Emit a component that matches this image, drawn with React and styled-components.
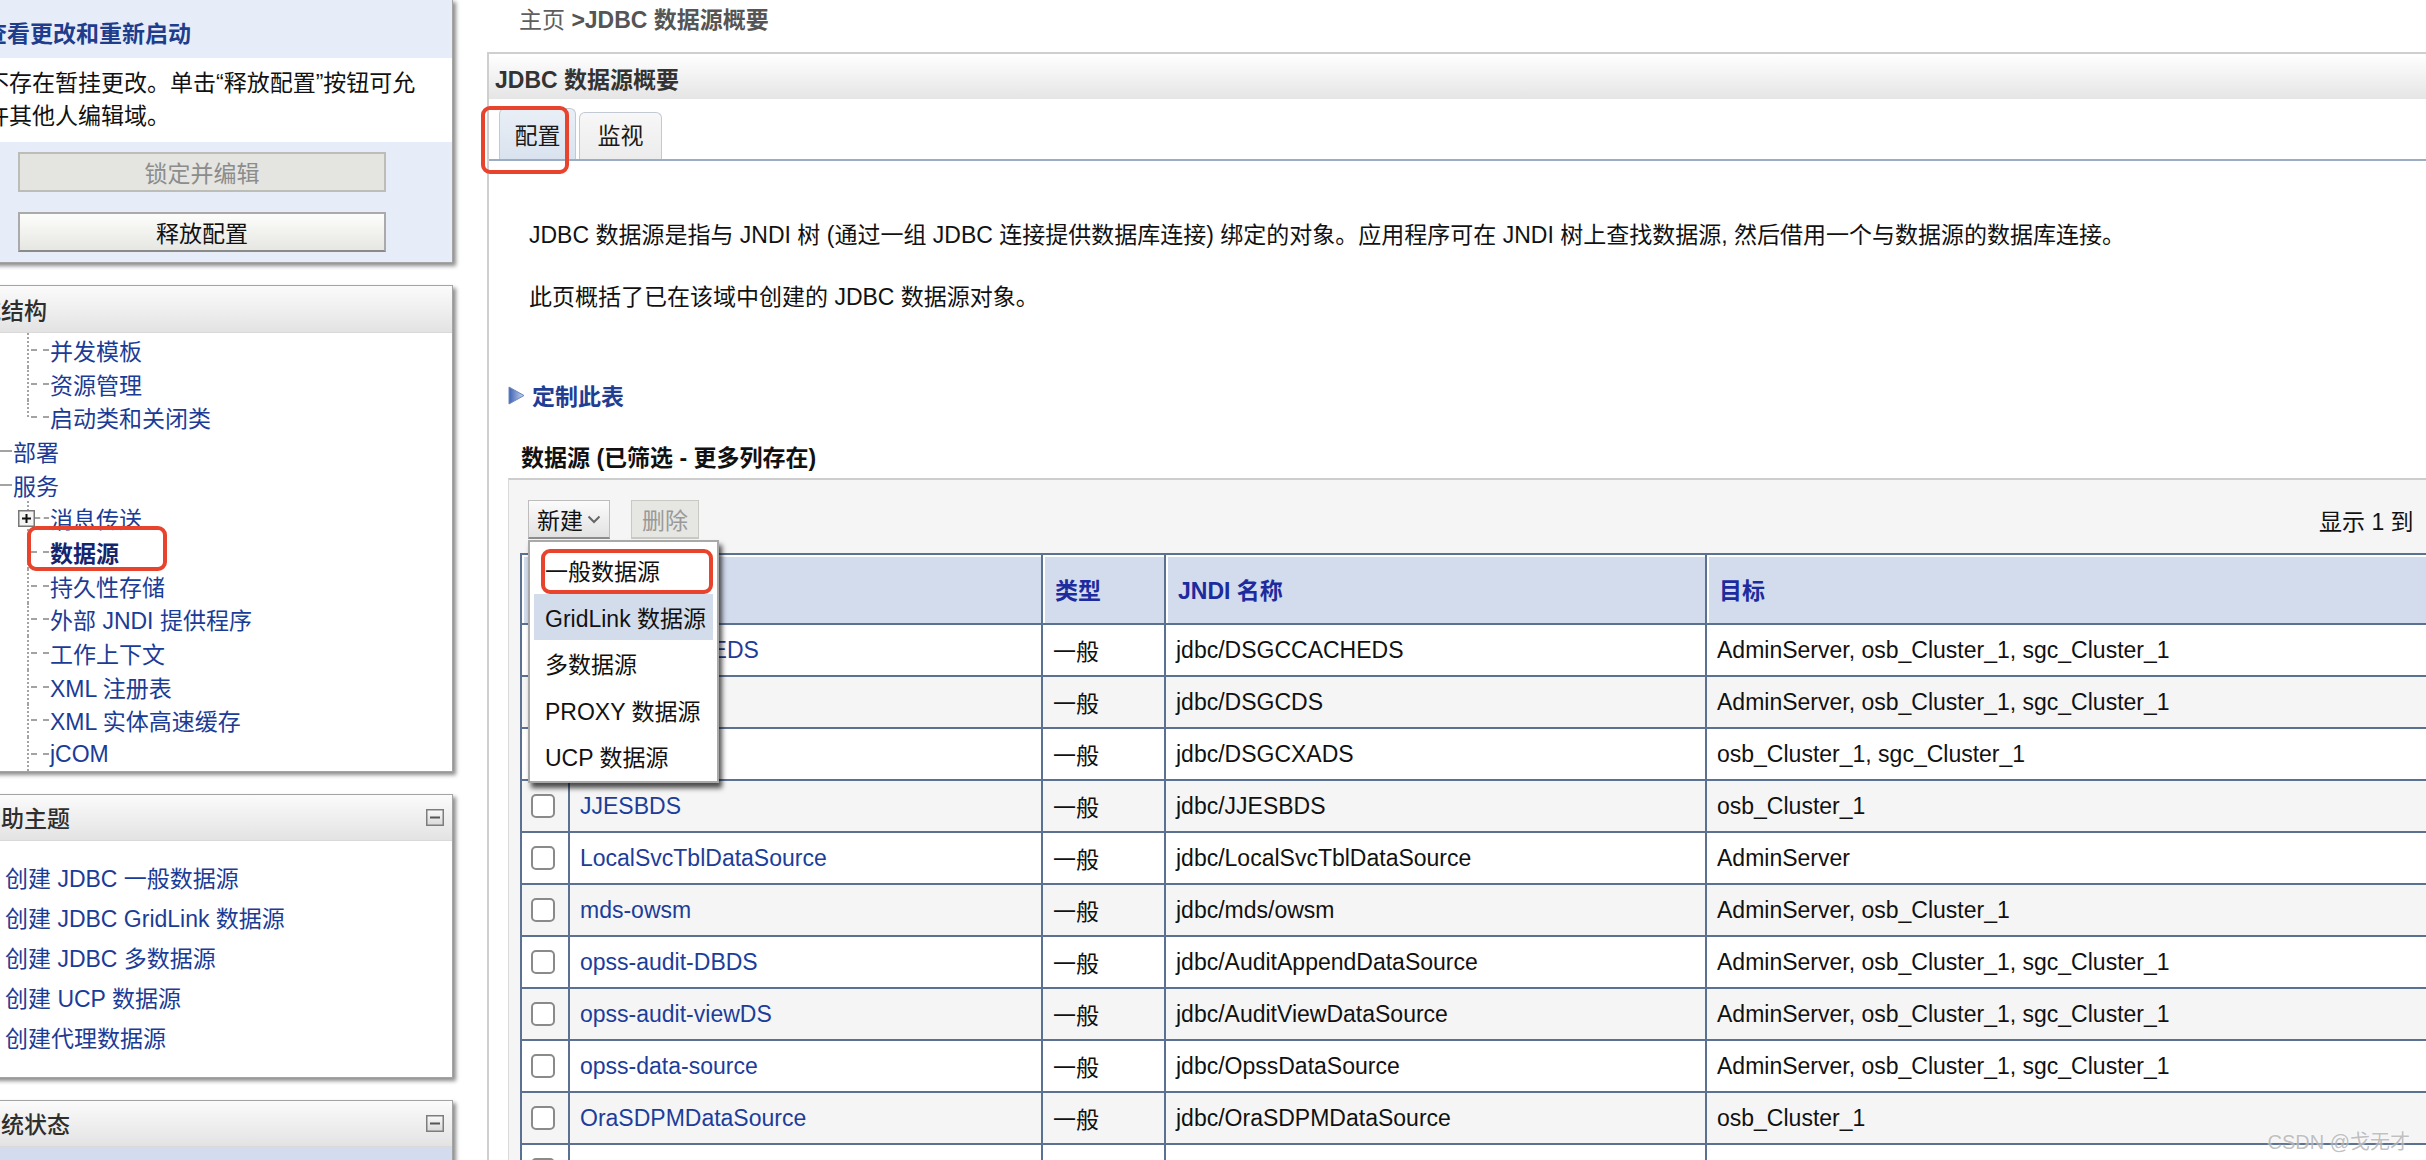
import styled, { createGlobalStyle } from 'styled-components';

const GlobalStyle = createGlobalStyle`
  html, body {
    margin: 0;
    padding: 0;
    background: #fff;
    overflow: hidden;
  }
  body {
    font-family: "Liberation Sans", "Noto Sans CJK SC", sans-serif;
    font-size: 23px;
    color: #000;
  }
  * { box-sizing: border-box; }
`;

const Page = styled.div`
  position: relative;
  display: flex;
  align-items: flex-start;
  gap: 34px;
  width: 2426px;
  height: 1160px;
  overflow: hidden;
`;

/* ---------- left column ---------- */

const LeftColumn = styled.div`
  flex: 0 0 493px;
  margin-left: -40px;
  display: flex;
  flex-direction: column;
  gap: 22px;
`;

const Panel = styled.div`
  background: ${(p) => p.$bg || '#fff'};
  border: 1px solid #a4a4a4;
  box-shadow: 3px 3px 4px rgba(0, 0, 0, 0.45);
  margin-top: ${(p) => (p.$first ? '-1px' : '0')};
`;

const ChangeHeader = styled.div`
  height: 58px;
  padding: 6px 0 0 23px;
  display: flex;
  align-items: center;
  color: #1f3d8d;
  font-weight: bold;
  white-space: nowrap;
`;

const ChangeText = styled.div`
  background: #fff;
  padding: 9px 6px 9px 25px;
  line-height: 33px;
  color: #111;
  white-space: nowrap;
`;

const ButtonStack = styled.div`
  display: flex;
  flex-direction: column;
  gap: 20px;
  padding: 10px 0 10px 57px;
`;

const WideButton = styled.div`
  width: 368px;
  height: 40px;
  display: flex;
  align-items: center;
  justify-content: center;
  border: 2px solid ${(p) => (p.$disabled ? '#bdbdb8' : '#aaa')};
  border-bottom-color: ${(p) => (p.$disabled ? '#bdbdb8' : '#8a8a8a')};
  background: ${(p) =>
    p.$disabled ? '#e4e4e0' : 'linear-gradient(#fdfdfb, #e6e6e2)'};
  color: ${(p) => (p.$disabled ? '#8c8c8c' : '#111')};
`;

const BoxHeader = styled.div`
  height: ${(p) => p.$h || 46}px;
  padding: 0 8px 0 17px;
  display: flex;
  align-items: center;
  justify-content: space-between;
  background: linear-gradient(#fbfbfb, #e3e3e3);
  border-bottom: 1px solid #d9d9d9;
  color: #2e2e2e;
  font-weight: 500;
  white-space: nowrap;
`;

const TreeList = styled.div`
  display: flex;
  flex-direction: column;
`;

const TreeRow = styled.div`
  position: relative;
  display: flex;
  align-items: center;
  height: 33.7px;
  padding-left: ${(p) => (p.$level ? 66 : 39)}px;
  white-space: nowrap;
`;

const Connector = styled.span`
  position: relative;
  flex: 0 0 ${(p) => (p.$level ? 22 : 12)}px;
  align-self: stretch;
  margin-right: 1px;

  &::before {
    content: '';
    display: ${(p) => (p.$level ? 'block' : 'none')};
    position: absolute;
    left: 0;
    top: 0;
    bottom: ${(p) => (p.$last ? '50%' : '0')};
    border-left: 2px dotted #a3a3a3;
  }

  &::after {
    content: '';
    position: absolute;
    left: ${(p) => (p.$plus ? 8 : p.$level ? 4 : 0)}px;
    right: 0;
    top: calc(50% - 1px);
    border-top: 2px dashed #a3a3a3;
  }
`;

const PlusBox = styled.svg`
  position: absolute;
  left: -9px;
  top: calc(50% - 8px);
  z-index: 1;
`;

const TreeLink = styled.span`
  color: ${(p) => (p.$active ? '#14246e' : '#1b3c96')};
  font-weight: ${(p) => (p.$active ? 'bold' : 'normal')};
`;

const Mark = styled.div`
  position: absolute;
  left: ${(p) => p.$x}px;
  top: ${(p) => p.$y}px;
  width: ${(p) => p.$w}px;
  height: ${(p) => p.$h}px;
  border: 4px solid #e8432c;
  border-radius: 9px;
  pointer-events: none;
  z-index: 6;
`;

const HelpList = styled.div`
  display: flex;
  flex-direction: column;
  padding: 18px 0 18px 44px;
`;

const HelpLink = styled.div`
  height: 40px;
  line-height: 40px;
  color: #1b3c96;
  white-space: nowrap;
`;

const StatusBody = styled.div`
  height: 80px;
  background: #d3dcee;
`;

/* ---------- main area ---------- */

const Main = styled.div`
  flex: 0 0 2000px;
  display: flex;
  flex-direction: column;
`;

const Breadcrumb = styled.div`
  height: 52px;
  padding-left: 32px;
  line-height: 40px;
  color: #5e5e5e;
  white-space: nowrap;

  b {
    color: #555;
  }
`;

const MainPanel = styled.div`
  border-top: 2px solid #cfcfcf;
  border-left: 2px solid #cfcfcf;
  background: #fff;
`;

const MainHeader = styled.div`
  height: 45px;
  padding: 2px 0 0 6px;
  display: flex;
  align-items: center;
  background: linear-gradient(#ffffff, #e5e5e5);
  color: #333;
  font-weight: bold;
`;

const TabBar = styled.div`
  height: 62px;
  display: flex;
  align-items: flex-end;
  gap: 3px;
  padding-left: 10px;
  border-bottom: 2px solid #9dadc1;
`;

const Tab = styled.div`
  position: relative;
  height: ${(p) => (p.$active ? 51 : 47)}px;
  padding: 0 ${(p) => (p.$active ? 14.5 : 17.5)}px ${(p) => (p.$active ? 0 : 4)}px;
  display: flex;
  align-items: center;
  border: 1px solid #c2c9d3;
  border-bottom: none;
  border-radius: 6px 6px 0 0;
  background: ${(p) =>
    p.$active ? 'linear-gradient(#e9eff6, #d9e3ef)' : 'linear-gradient(#f7f7f7, #ececec)'};
  color: #1a1a1a;
`;

const Content = styled.div`
  padding-left: 19px;
`;

const Para = styled.p`
  margin: ${(p) => p.$top}px 0 0 21px;
  line-height: 34px;
  white-space: nowrap;
  color: #111;
`;

const Customize = styled.div`
  margin-top: 64px;
  height: 34px;
  display: flex;
  align-items: center;
  gap: 7px;
  color: #1f3e94;
  font-weight: bold;
`;

const SectionTitle = styled.div`
  margin: 29px 0 0 13px;
  height: 34px;
  line-height: 34px;
  font-weight: bold;
  color: #111;
  white-space: nowrap;
`;

const TableBox = styled.div`
  margin-top: 3px;
  border-top: 2px solid #cdcdcd;
  border-left: 1px solid #dadada;
  background: #f5f5f5;
  padding: 20px 0 0 19px;
`;

const Toolbar = styled.div`
  display: grid;
  grid-template-columns: 1791px auto;
  align-items: center;
  height: 39px;
`;

const ButtonGroup = styled.div`
  display: flex;
  gap: 21px;
`;

const MenuAnchor = styled.div`
  position: relative;
`;

const ToolButton = styled.div`
  height: 39px;
  padding: 0 ${(p) => (p.$disabled ? 10 : 8)}px;
  display: flex;
  align-items: center;
  gap: 4px;
  border: 1px solid ${(p) => (p.$disabled ? '#c9c9c4' : '#bdbdbd')};
  border-bottom: 2px solid ${(p) => (p.$disabled ? '#c9c9c4' : '#8d8d8d')};
  background: ${(p) => (p.$disabled ? '#e6e6e2' : 'linear-gradient(#fbfbfb, #e2e2e2)')};
  color: ${(p) => (p.$disabled ? '#999' : '#111')};
`;

const Pager = styled.div`
  white-space: nowrap;
  color: #111;
`;

const Menu = styled.div`
  position: absolute;
  left: 0;
  top: 40px;
  width: 191px;
  padding: 5px 4px 1px;
  background: #fff;
  border: 2px solid #a9a9a9;
  box-shadow: 3px 5px 5px rgba(0, 0, 0, 0.7);
  z-index: 5;
`;

const MenuItem = styled.div`
  position: relative;
  height: 46.5px;
  padding-left: 11px;
  display: flex;
  align-items: center;
  background: ${(p) => (p.$hover ? '#d3dcea' : 'transparent')};
  color: #111;
  white-space: nowrap;
`;

const Grid = styled.table`
  margin: 14px 0 0 -8px;
  border-collapse: collapse;
  table-layout: fixed;
  width: 2085px;
`;

const Col = styled.col`
  width: ${(p) => p.$w}px;
`;

const HeadCell = styled.th`
  height: 70px;
  padding: 0 12px;
  text-align: left;
  background: #d2dcec;
  border: 2px solid #5b7191;
  box-shadow: inset 2px 2px 0 #fff;
  color: #1c2b9e;
  font-weight: bold;
  white-space: nowrap;
`;

const Row = styled.tr`
  background: ${(p) => (p.$even ? '#f5f5f5' : '#fff')};
`;

const Cell = styled.td`
  height: 52px;
  padding: 0 ${(p) => (p.$check ? 9 : 10)}px;
  border: 2px solid #5b7191;
  white-space: nowrap;
  overflow: hidden;
  color: #111;
`;

const NameLink = styled.span`
  color: #1c3d9a;
`;

const CheckBox = styled.span`
  display: block;
  width: 24px;
  height: 24px;
  border: 2px solid #8a8a8a;
  border-radius: 5px;
  background: #fff;
`;

const Watermark = styled.div`
  position: absolute;
  right: 16px;
  bottom: 5px;
  font-size: 20px;
  color: rgba(140, 140, 140, 0.55);
  text-shadow: 0 0 2px #fff;
  white-space: nowrap;
`;

/* ---------- icons ---------- */

const MinusIcon = () => (
  <svg width="18" height="17" viewBox="0 0 18 17">
    <defs>
      <linearGradient id="minusFill" x1="0" y1="0" x2="0" y2="1">
        <stop offset="0" stopColor="#fafafa" />
        <stop offset="1" stopColor="#d9d9d9" />
      </linearGradient>
    </defs>
    <rect x="0.75" y="0.75" width="16.5" height="15.5" fill="url(#minusFill)" stroke="#7d7d7d" strokeWidth="1.5" />
    <rect x="4" y="7.5" width="10" height="2" fill="#555" />
  </svg>
);

const PlusIcon = () => (
  <PlusBox width="17" height="17" viewBox="0 0 17 17">
    <rect x="0.75" y="0.75" width="15.5" height="15.5" fill="#f4f4f4" stroke="#777" strokeWidth="1.5" />
    <rect x="4" y="7.5" width="9" height="2" fill="#111" />
    <rect x="7.5" y="4" width="2" height="9" fill="#111" />
  </PlusBox>
);

const ExpandTriangle = () => (
  <svg width="17" height="19" viewBox="0 0 17 19">
    <defs>
      <linearGradient id="triFill" x1="0" y1="0" x2="1" y2="0">
        <stop offset="0" stopColor="#3e62b2" />
        <stop offset="1" stopColor="#c8d5ee" />
      </linearGradient>
    </defs>
    <polygon points="1,1 16,9.5 1,18" fill="url(#triFill)" stroke="#6c86c2" strokeWidth="1" />
  </svg>
);

const Chevron = () => (
  <svg width="14" height="9" viewBox="0 0 14 9">
    <polyline points="1.5,1.5 7,7 12.5,1.5" fill="none" stroke="#666" strokeWidth="2" />
  </svg>
);

/* ---------- data ---------- */

const tree = [
  { label: '并发模板', level: 1 },
  { label: '资源管理', level: 1 },
  { label: '启动类和关闭类', level: 1, last: true },
  { label: '部署', level: 0 },
  { label: '服务', level: 0 },
  { label: '消息传送', level: 1, plus: true },
  { label: '数据源', level: 1, active: true },
  { label: '持久性存储', level: 1 },
  { label: '外部 JNDI 提供程序', level: 1 },
  { label: '工作上下文', level: 1 },
  { label: 'XML 注册表', level: 1 },
  { label: 'XML 实体高速缓存', level: 1 },
  { label: 'jCOM', level: 1 },
];

const helpTopics = [
  '创建 JDBC 一般数据源',
  '创建 JDBC GridLink 数据源',
  '创建 JDBC 多数据源',
  '创建 UCP 数据源',
  '创建代理数据源',
];

const menuItems = ['一般数据源', 'GridLink 数据源', '多数据源', 'PROXY 数据源', 'UCP 数据源'];

const ALL = 'AdminServer, osb_Cluster_1, sgc_Cluster_1';

const dataSources = [
  { name: 'DSGCCACHEDS', jndi: 'jdbc/DSGCCACHEDS', target: ALL },
  { name: 'DSGCDS', jndi: 'jdbc/DSGCDS', target: ALL },
  { name: 'DSGCXADS', jndi: 'jdbc/DSGCXADS', target: 'osb_Cluster_1, sgc_Cluster_1' },
  { name: 'JJESBDS', jndi: 'jdbc/JJESBDS', target: 'osb_Cluster_1' },
  { name: 'LocalSvcTblDataSource', jndi: 'jdbc/LocalSvcTblDataSource', target: 'AdminServer' },
  { name: 'mds-owsm', jndi: 'jdbc/mds/owsm', target: 'AdminServer, osb_Cluster_1' },
  { name: 'opss-audit-DBDS', jndi: 'jdbc/AuditAppendDataSource', target: ALL },
  { name: 'opss-audit-viewDS', jndi: 'jdbc/AuditViewDataSource', target: ALL },
  { name: 'opss-data-source', jndi: 'jdbc/OpssDataSource', target: ALL },
  { name: 'OraSDPMDataSource', jndi: 'jdbc/OraSDPMDataSource', target: 'osb_Cluster_1' },
  { name: 'SOADataSource', jndi: 'jdbc/SOADataSource', target: 'osb_Cluster_1' },
];

const App = () => {
  return (
    <Page>
      <GlobalStyle />
      <LeftColumn>
        <Panel $bg="#e7edf8" $first>
          <ChangeHeader>查看更改和重新启动</ChangeHeader>
          <ChangeText>
            不存在暂挂更改。单击“释放配置”按钮可允
            <br />
            许其他人编辑域。
          </ChangeText>
          <ButtonStack>
            <WideButton $disabled>锁定并编辑</WideButton>
            <WideButton>释放配置</WideButton>
          </ButtonStack>
        </Panel>

        <Panel>
          <BoxHeader $h={47}>域结构</BoxHeader>
          <TreeList>
            {tree.map((item) => (
              <TreeRow key={item.label} $level={item.level}>
                <Connector $level={item.level} $last={item.last} $plus={item.plus}>
                  {item.plus && <PlusIcon />}
                </Connector>
                <TreeLink $active={item.active}>{item.label}</TreeLink>
                {item.active && <Mark $x={66} $y={-9} $w={140} $h={45} />}
              </TreeRow>
            ))}
          </TreeList>
        </Panel>

        <Panel>
          <BoxHeader>
            帮助主题
            <MinusIcon />
          </BoxHeader>
          <HelpList>
            {helpTopics.map((topic) => (
              <HelpLink key={topic}>{topic}</HelpLink>
            ))}
          </HelpList>
        </Panel>

        <Panel>
          <BoxHeader>
            系统状态
            <MinusIcon />
          </BoxHeader>
          <StatusBody />
        </Panel>
      </LeftColumn>

      <Main>
        <Breadcrumb>
          主页 <b>&gt;JDBC 数据源概要</b>
        </Breadcrumb>
        <MainPanel>
          <MainHeader>JDBC 数据源概要</MainHeader>
          <TabBar>
            <Tab $active>
              配置
              <Mark $x={-19} $y={-3} $w={88} $h={68} />
            </Tab>
            <Tab>监视</Tab>
          </TabBar>

          <Content>
            <Para $top={57}>
              JDBC 数据源是指与 JNDI 树 (通过一组 JDBC 连接提供数据库连接) 绑定的对象。应用程序可在 JNDI 树上查找数据源, 然后借用一个与数据源的数据库连接。
            </Para>
            <Para $top={28}>此页概括了已在该域中创建的 JDBC 数据源对象。</Para>

            <Customize>
              <ExpandTriangle />
              定制此表
            </Customize>

            <SectionTitle>数据源 (已筛选 - 更多列存在)</SectionTitle>

            <TableBox>
              <Toolbar>
                <ButtonGroup>
                  <MenuAnchor>
                    <ToolButton>
                      新建
                      <Chevron />
                    </ToolButton>
                    <Menu>
                      {menuItems.map((label, i) => (
                        <MenuItem key={label} $hover={i === 1}>
                          {label}
                          {i === 0 && <Mark $x={7} $y={2} $w={172} $h={45} />}
                        </MenuItem>
                      ))}
                    </Menu>
                  </MenuAnchor>
                  <ToolButton $disabled>删除</ToolButton>
                </ButtonGroup>
                <Pager>显示 1 到&nbsp;&nbsp;10 个, 共 11 个 上一页 | 下一页</Pager>
              </Toolbar>

              <Grid>
                <colgroup>
                  <Col $w={48} />
                  <Col $w={473} />
                  <Col $w={123} />
                  <Col $w={541} />
                  <Col $w={900} />
                </colgroup>
                <thead>
                  <tr>
                    <HeadCell />
                    <HeadCell>名称</HeadCell>
                    <HeadCell>类型</HeadCell>
                    <HeadCell>JNDI 名称</HeadCell>
                    <HeadCell>目标</HeadCell>
                  </tr>
                </thead>
                <tbody>
                  {dataSources.map((ds, i) => (
                    <Row key={ds.name} $even={i % 2 === 1}>
                      <Cell $check>
                        <CheckBox />
                      </Cell>
                      <Cell>
                        <NameLink>{ds.name}</NameLink>
                      </Cell>
                      <Cell>一般</Cell>
                      <Cell>{ds.jndi}</Cell>
                      <Cell>{ds.target}</Cell>
                    </Row>
                  ))}
                </tbody>
              </Grid>
            </TableBox>
          </Content>
        </MainPanel>
      </Main>

      <Watermark>CSDN @戈无才</Watermark>
    </Page>
  );
};

export default App;
